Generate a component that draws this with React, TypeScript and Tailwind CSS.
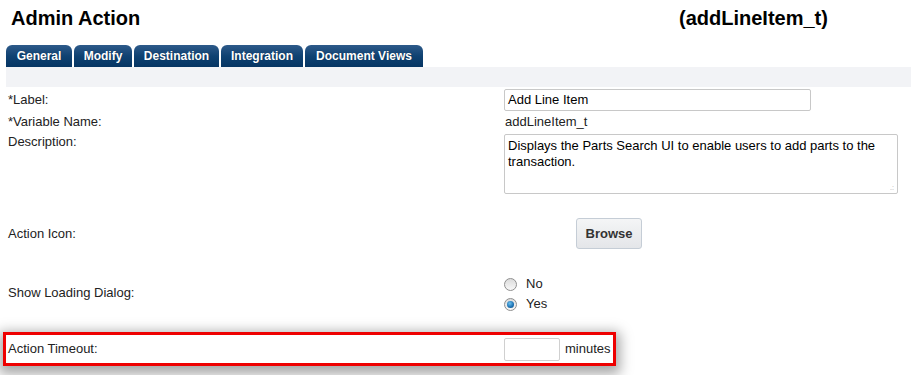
import React from "react";

const tabs = [
  { label: "General", w: 66 },
  { label: "Modify", w: 58 },
  { label: "Destination", w: 85 },
  { label: "Integration", w: 82 },
  { label: "Document Views", w: 118 },
];

function Radio({ checked }: { checked?: boolean }) {
  return (
    <span className="relative inline-flex h-[13px] w-[13px] items-center justify-center rounded-full border border-[#8f8f8f] bg-gradient-to-b from-[#dcdcdc] to-[#f8f8f8]">
      {checked && (
        <span className="h-[7px] w-[7px] rounded-full bg-[radial-gradient(circle_at_40%_35%,#6cc0f0,#1a6fb0_60%,#0d4a80)]" />
      )}
    </span>
  );
}

export default function App() {
  return (
    <div
      className="h-[375px] w-[911px] overflow-hidden bg-white text-[13px] text-[#222]"
      style={{ fontFamily: '"Liberation Sans", Arial, sans-serif' }}
    >
      {/* Header */}
      <div className="flex h-[45px] items-start pt-[5px] text-[20px] font-bold leading-[26px] text-black">
        <div className="w-[679px] pl-[11px]">Admin Action</div>
        <div>(addLineItem_t)</div>
      </div>

      {/* Tabs */}
      <div className="flex h-[22px] gap-[2px] pl-[6px]">
        {tabs.map((t) => (
          <div
            key={t.label}
            className="flex h-[22px] items-center justify-center rounded-t-[6px] bg-gradient-to-b from-[#2d5a8a] via-[#0f4272] to-[#063563] text-[12px] font-bold text-white [text-shadow:0_0_1px_#0a2a4a]"
            style={{ width: t.w }}
          >
            {t.label}
          </div>
        ))}
      </div>

      {/* Gray band */}
      <div className="ml-[6px] h-[20px] bg-[#f2f3f6]" />

      {/* Label row */}
      <div className="mt-[2px] flex h-[22px] items-center">
        <div className="w-[504px] pl-[8px]">*Label:</div>
        <div className="flex h-[22px] w-[307px] items-center rounded-[2px] border border-[#c8c8c8] px-[3px] text-black">
          Add Line Item
        </div>
      </div>

      {/* Variable name */}
      <div className="mt-[1px] flex h-[20px] items-center">
        <div className="w-[504px] pl-[8px]">*Variable Name:</div>
        <div className="pl-[1px]">addLineItem_t</div>
      </div>

      {/* Description */}
      <div className="mt-[2px] flex">
        <div className="w-[504px] pl-[8px] leading-[16px]">Description:</div>
        <div className="relative h-[60px] w-[394px] rounded-[2px] border border-[#c8c8c8] px-[3px] pt-[3px] leading-[16px] text-black">
          Displays the Parts Search UI to enable users to add parts to the transaction.
          <span className="absolute bottom-[2px] right-[3px] text-[7px] leading-[7px] text-[#aaa]">.:</span>
        </div>
      </div>

      {/* Action Icon */}
      <div className="mt-[24px] flex h-[31px] items-center">
        <div className="w-[504px] pl-[8px]">Action Icon:</div>
        <div className="ml-[72px] flex h-[31px] w-[66px] items-center justify-center rounded-[3px] border border-[#c5cdd6] bg-gradient-to-b from-[#f4f5f6] to-[#e4e6e9] text-[13px] font-bold text-[#333]">
          Browse
        </div>
      </div>

      {/* Show Loading Dialog */}
      <div className="mt-[25px] flex h-[40px] items-center">
        <div className="w-[504px] pb-[3px] pl-[8px]">Show Loading Dialog:</div>
        <div className="flex flex-col gap-[6px]">
          <div className="flex h-[14px] items-center">
            <Radio />
            <span className="ml-[9px]">No</span>
          </div>
          <div className="flex h-[14px] items-center">
            <Radio checked />
            <span className="ml-[9px]">Yes</span>
          </div>
        </div>
      </div>

      {/* Action Timeout */}
      <div className="ml-[3px] mt-[18px] flex h-[34px] w-[613px] items-center border-[3px] border-[#ee0000] shadow-[0_4px_12px_4px_rgba(0,0,0,0.35)]">
        <div className="w-[498px] pl-[2px]">Action Timeout:</div>
        <div className="h-[23px] w-[56px] rounded-[2px] border border-[#d0d0d0] bg-white" />
        <div className="ml-[5px]">minutes</div>
      </div>
    </div>
  );
}
